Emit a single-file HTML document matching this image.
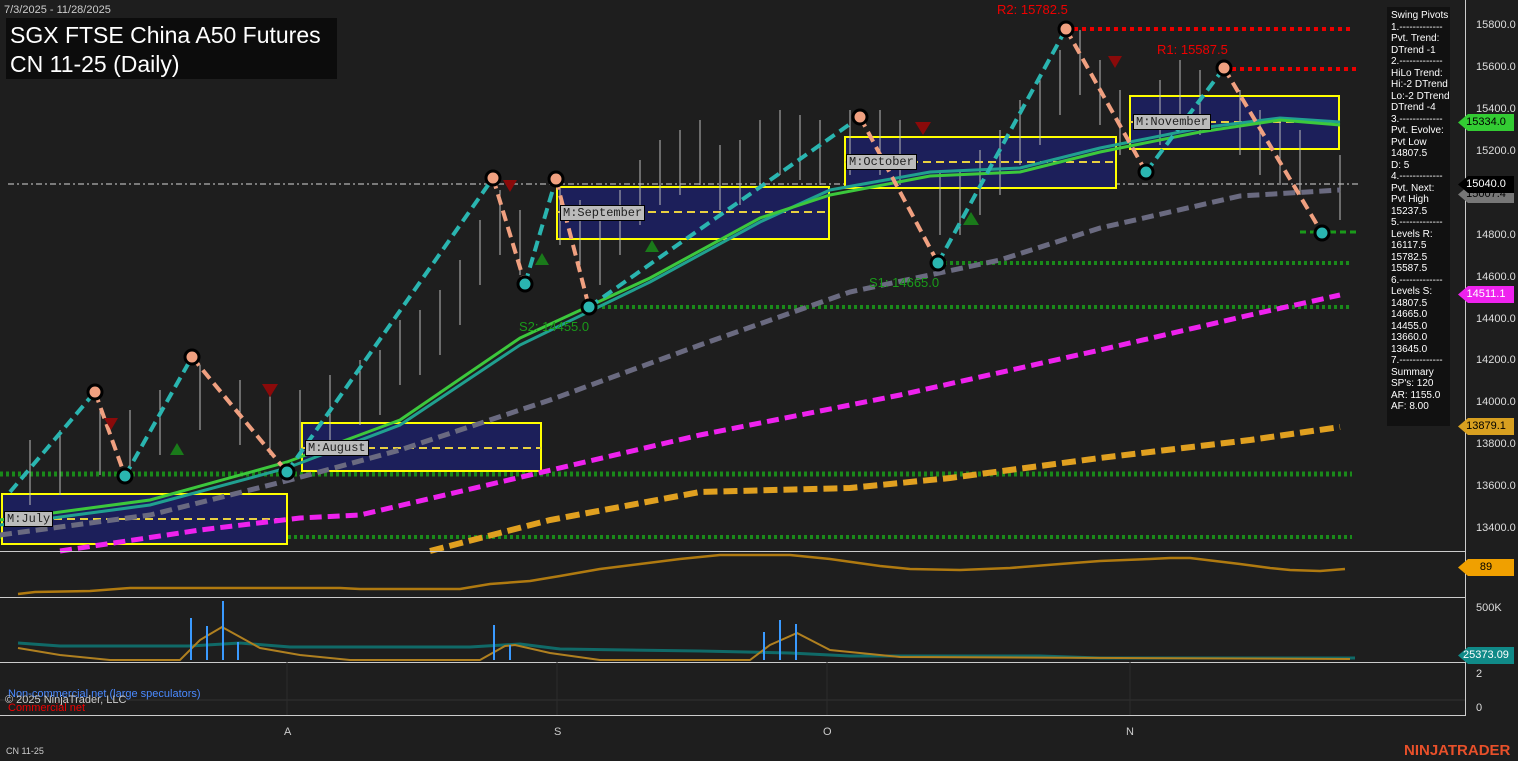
<!DOCTYPE html>
<html><head><meta charset="utf-8"><style>
body{margin:0;width:1518px;height:761px;background:#1e1e1e;overflow:hidden;font-family:"Liberation Sans",sans-serif;position:relative}
.t{position:absolute;white-space:nowrap}
.ax{position:absolute;left:1476px;color:#ddd;font-size:11px}
.tag{position:absolute;left:1458px;width:56px;height:17px;font-size:11px;line-height:17px;text-align:center;clip-path:polygon(0 50%,10px 0,100% 0,100% 100%,10px 100%)}
</style></head><body>
<svg width="1518" height="761" style="position:absolute;left:0;top:0" id="s">
<g fill="none">
<line x1="8" y1="184" x2="1360" y2="184" stroke="#999" stroke-width="1.5" stroke-dasharray="6,3,2,3"/>
<line x1="938" y1="263" x2="1352" y2="263" stroke="#1a8a1a" stroke-width="4" stroke-dasharray="3,3"/>
<line x1="590" y1="307" x2="1352" y2="307" stroke="#1a8a1a" stroke-width="4" stroke-dasharray="3,3"/>
<line x1="0" y1="474" x2="1352" y2="474" stroke="#1a8a1a" stroke-width="5" stroke-dasharray="3,3"/>
<line x1="0" y1="537" x2="1352" y2="537" stroke="#1a8a1a" stroke-width="4" stroke-dasharray="3,3"/>
<line x1="1066" y1="29" x2="1352" y2="29" stroke="#e00" stroke-width="4" stroke-dasharray="4,4"/>
<line x1="1224" y1="69" x2="1358" y2="69" stroke="#e00" stroke-width="4" stroke-dasharray="4,4"/>
<line x1="1300" y1="232" x2="1358" y2="232" stroke="#1a9a1a" stroke-width="3" stroke-dasharray="6,4"/>
<rect x="2" y="494" width="285" height="50" fill="#1c1f5a" stroke="#ff0" stroke-width="2"/>
<rect x="302" y="423" width="239" height="48" fill="#1c1f5a" stroke="#ff0" stroke-width="2"/>
<rect x="557" y="187" width="272" height="52" fill="#1c1f5a" stroke="#ff0" stroke-width="2"/>
<rect x="845" y="137" width="271" height="51" fill="#1c1f5a" stroke="#ff0" stroke-width="2"/>
<rect x="1130" y="96" width="209" height="53" fill="#1c1f5a" stroke="#ff0" stroke-width="2"/>
<g stroke="#e8d040" stroke-width="2" stroke-dasharray="8,5">
<line x1="2" y1="519" x2="287" y2="519"/><line x1="302" y1="448" x2="541" y2="448"/>
<line x1="557" y1="212" x2="829" y2="212"/><line x1="845" y1="162" x2="1116" y2="162"/>
<line x1="1130" y1="122" x2="1339" y2="122"/></g>
<g id="c"></g>
<polyline stroke="#e0a020" stroke-width="6" stroke-dasharray="14,6" points="430,551 550,520 700,492 850,488 950,478 1100,458 1250,440 1340,427"/>
<polyline stroke="#ee22ee" stroke-width="5" stroke-dasharray="12,6" points="60,551 200,530 300,518 360,515 500,482 700,435 900,395 1100,350 1250,315 1340,295"/>
<polyline stroke="#6a6a80" stroke-width="5" stroke-dasharray="12,6" points="0,535 150,515 290,480 400,450 550,400 700,345 850,292 1000,260 1100,228 1240,196 1340,190"/>
<polyline stroke="#20a090" stroke-width="3" points="0,525 150,505 287,468 400,425 520,345 650,282 760,222 830,190 930,172 1020,168 1100,148 1200,128 1280,118 1340,122"/>
<polyline stroke="#3cc83c" stroke-width="3" points="0,520 150,500 287,462 400,420 520,338 650,278 760,218 830,195 930,176 1020,172 1100,152 1200,132 1280,120 1340,125"/>
<g stroke-width="4" stroke-dasharray="11,6">
<polyline stroke="#2ab5b0" points="10,492 95,392"/><polyline stroke="#f0a080" points="95,392 125,476"/>
<polyline stroke="#2ab5b0" points="125,476 192,357"/><polyline stroke="#f0a080" points="192,357 287,472"/>
<polyline stroke="#2ab5b0" points="287,472 493,178"/><polyline stroke="#f0a080" points="493,178 525,284"/>
<polyline stroke="#2ab5b0" points="525,284 556,179"/><polyline stroke="#f0a080" points="556,179 589,307"/>
<polyline stroke="#2ab5b0" points="589,307 860,117"/><polyline stroke="#f0a080" points="860,117 938,263"/>
<polyline stroke="#2ab5b0" points="938,263 1066,29"/><polyline stroke="#f0a080" points="1066,29 1146,172"/>
<polyline stroke="#2ab5b0" points="1146,172 1224,68"/><polyline stroke="#f0a080" points="1224,68 1322,233"/>
</g>
<g stroke="#000" stroke-width="3">
<circle cx="95" cy="392" r="7" fill="#f0a080"/><circle cx="192" cy="357" r="7" fill="#f0a080"/><circle cx="493" cy="178" r="7" fill="#f0a080"/><circle cx="556" cy="179" r="7" fill="#f0a080"/><circle cx="860" cy="117" r="7" fill="#f0a080"/><circle cx="1066" cy="29" r="7" fill="#f0a080"/><circle cx="1224" cy="68" r="7" fill="#f0a080"/>
<circle cx="125" cy="476" r="7" fill="#2ab5b0"/><circle cx="287" cy="472" r="7" fill="#2ab5b0"/><circle cx="525" cy="284" r="7" fill="#2ab5b0"/><circle cx="589" cy="307" r="7" fill="#2ab5b0"/><circle cx="938" cy="263" r="7" fill="#2ab5b0"/><circle cx="1146" cy="172" r="7" fill="#2ab5b0"/><circle cx="1322" cy="233" r="7" fill="#2ab5b0"/>
</g>
<g fill="#8a0a0a"><path d="M262,384h16l-8,13z"/><path d="M503,180h14l-7,12z"/><path d="M915,122h16l-8,13z"/><path d="M1108,56h14l-7,12z"/><path d="M104,418h14l-7,12z"/></g>
<g fill="#1a7a1a"><path d="M170,455h14l-7,-12z"/><path d="M645,252h14l-7,-12z"/><path d="M963,225h16l-8,-13z"/><path d="M535,265h14l-7,-12z"/></g>
<line x1="0" y1="551.5" x2="1466" y2="551.5" stroke="#ccc"/>
<line x1="0" y1="597.5" x2="1466" y2="597.5" stroke="#ccc"/>
<line x1="0" y1="662.5" x2="1466" y2="662.5" stroke="#ccc"/>
<line x1="0" y1="715.5" x2="1466" y2="715.5" stroke="#ccc"/>
<line x1="1465.5" y1="0" x2="1465.5" y2="715" stroke="#ccc"/>
<line x1="0" y1="700" x2="1465" y2="700" stroke="#333"/>
<g stroke="#2c2c2c"><line x1="287" y1="662" x2="287" y2="715"/><line x1="557" y1="662" x2="557" y2="715"/><line x1="827" y1="662" x2="827" y2="715"/><line x1="1130" y1="662" x2="1130" y2="715"/></g>
<polyline stroke="#b07a10" stroke-width="2.5" points="18,594 35,592 90,591 130,588 340,588 360,589 420,589 460,589 490,584 530,581 560,576 600,569 640,564 680,559 720,555 790,555 830,559 880,566 910,569 960,570 1010,568 1060,564 1100,561 1150,559 1170,558 1190,558 1215,561 1240,564 1270,568 1290,570 1320,571 1345,569"/>
<polyline stroke="#106a68" stroke-width="3" points="18,643 60,646 190,646 240,643 290,647 470,647 520,644 560,649 700,651 790,653 850,656 1040,656 1100,658 1355,658"/>
<polyline stroke="#b08020" stroke-width="2" points="18,648 60,655 110,660 180,660 200,640 222,627 260,648 300,655 350,660 480,660 505,646 515,645 550,653 600,660 750,660 770,645 797,633 830,650 900,657 1350,659"/>
<g stroke="#3a9aff" stroke-width="2"><line x1="191" y1="660" x2="191" y2="618"/><line x1="207" y1="660" x2="207" y2="626"/><line x1="223" y1="660" x2="223" y2="601"/><line x1="238" y1="660" x2="238" y2="642"/><line x1="494" y1="660" x2="494" y2="625"/><line x1="510" y1="660" x2="510" y2="645"/><line x1="764" y1="660" x2="764" y2="632"/><line x1="780" y1="660" x2="780" y2="620"/><line x1="796" y1="660" x2="796" y2="624"/></g>
</g>
</svg>
<script>
var g=document.getElementById('c'),s='';
var pts=[[30,470],[60,460],[100,440],[130,440],[160,420],[200,395],[240,410],[270,420],[300,420],[330,405],[360,390],[380,380],[400,350],[420,340],[440,320],[460,290],[480,250],[500,220],[520,240],[560,210],[580,230],[600,250],[620,220],[640,190],[660,170],[680,160],[700,150],[720,175],[740,170],[760,150],[780,140],[800,145],[820,150],[850,140],[880,140],[900,150],[940,200],[960,200],[980,180],[1000,160],[1020,130],[1040,110],[1060,80],[1080,60],[1100,90],[1120,120],[1160,110],[1180,90],[1200,100],[1240,120],[1260,140],[1280,150],[1300,160],[1340,185]];
pts.forEach(function(p){s+='<line x1="'+p[0]+'" y1="'+(p[1]-30)+'" x2="'+p[0]+'" y2="'+(p[1]+35)+'" stroke="#bbb" stroke-width="1"/>'});
g.innerHTML=s;
</script>
<div class="t" style="left:4px;top:4px;color:#ccc;font-size:11px">7/3/2025 - 11/28/2025</div>
<div class="t" style="left:6px;top:18px;width:331px;height:61px;background:#0c0c0c"></div>
<div class="t" style="left:10px;top:21px;color:#fff;font-size:23px;line-height:29px">SGX FTSE China A50 Futures<br>CN 11-25 (Daily)</div>
<div class="t" style="left:997px;top:2px;color:#e00;font-size:13px">R2: 15782.5</div>
<div class="t" style="left:1157px;top:42px;color:#e00;font-size:13px">R1: 15587.5</div>
<div class="t" style="left:519px;top:319px;color:#1a9a1a;font-size:13px">S2: 14455.0</div>
<div class="t" style="left:869px;top:275px;color:#1a9a1a;font-size:13px">S1: 14665.0</div>
<div class="t" style="left:4px;top:511px;background:#bbb;color:#222;font:12px 'Liberation Mono',monospace;border:1px solid #000;padding:0 2px">M:July</div>
<div class="t" style="left:305px;top:440px;background:#bbb;color:#222;font:12px 'Liberation Mono',monospace;border:1px solid #000;padding:0 2px">M:August</div>
<div class="t" style="left:560px;top:205px;background:#bbb;color:#222;font:12px 'Liberation Mono',monospace;border:1px solid #000;padding:0 2px">M:September</div>
<div class="t" style="left:846px;top:154px;background:#bbb;color:#222;font:12px 'Liberation Mono',monospace;border:1px solid #000;padding:0 2px">M:October</div>
<div class="t" style="left:1133px;top:114px;background:#bbb;color:#222;font:12px 'Liberation Mono',monospace;border:1px solid #000;padding:0 2px">M:November</div>
<div class="t" style="left:1387px;top:7px;width:63px;height:419px;background:#111;color:#fff;font-size:10px;line-height:11.5px;padding:3px 0 0 4px;box-sizing:border-box">Swing Pivots<br>1.-------------<br>Pvt. Trend:<br>DTrend -1<br>2.-------------<br>HiLo Trend:<br>Hi:-2 DTrend<br>Lo:-2 DTrend<br>DTrend -4<br>3.-------------<br>Pvt. Evolve:<br>Pvt Low<br>14807.5<br>D: 5<br>4.-------------<br>Pvt. Next:<br>Pvt High<br>15237.5<br>5.-------------<br>Levels R:<br>16117.5<br>15782.5<br>15587.5<br>6.-------------<br>Levels S:<br>14807.5<br>14665.0<br>14455.0<br>13660.0<br>13645.0<br>7.-------------<br>Summary<br>SP's: 120<br>AR: 1155.0<br>AF: 8.00</div>
<div class="ax" style="top:19px">15800.0</div><div class="ax" style="top:61px">15600.0</div><div class="ax" style="top:103px">15400.0</div><div class="ax" style="top:145px">15200.0</div><div class="ax" style="top:229px">14800.0</div><div class="ax" style="top:271px">14600.0</div><div class="ax" style="top:313px">14400.0</div><div class="ax" style="top:354px">14200.0</div><div class="ax" style="top:396px">14000.0</div><div class="ax" style="top:438px">13800.0</div><div class="ax" style="top:480px">13600.0</div><div class="ax" style="top:522px">13400.0</div>
<div class="ax" style="top:602px">500K</div><div class="ax" style="top:668px">2</div><div class="ax" style="top:702px">0</div>
<div class="tag" style="top:114px;background:#33cc33;color:#000">15334.0</div>
<div class="tag" style="top:186px;background:#777;color:#000">15007.4</div>
<div class="tag" style="top:176px;background:#000;color:#fff;outline:1px solid #888">15040.0</div>
<div class="tag" style="top:286px;background:#ee22ee;color:#fff">14511.1</div>
<div class="tag" style="top:418px;background:#d8a020;color:#000">13879.1</div>
<div class="tag" style="top:559px;background:#f0a000;color:#000">89</div>
<div class="tag" style="top:647px;background:#108a88;color:#fff">25373.09</div>
<div class="t" style="left:8px;top:688px;color:#4a8aff;font-size:11px">Non-commercial net (large speculators)</div>
<div class="t" style="left:5px;top:694px;color:#ccc;font-size:11px">© 2025 NinjaTrader, LLC</div>
<div class="t" style="left:8px;top:702px;color:#e00;font-size:11px">Commercial net</div>
<div class="t" style="left:284px;top:726px;color:#ccc;font-size:11px">A</div>
<div class="t" style="left:554px;top:726px;color:#ccc;font-size:11px">S</div>
<div class="t" style="left:823px;top:726px;color:#ccc;font-size:11px">O</div>
<div class="t" style="left:1126px;top:726px;color:#ccc;font-size:11px">N</div>
<div class="t" style="left:6px;top:746px;color:#ccc;font-size:9px">CN 11-25</div>
<div class="t" style="left:1404px;top:742px;color:#e8502a;font-size:15px;font-weight:bold">NINJATRADER</div>
</body></html>
